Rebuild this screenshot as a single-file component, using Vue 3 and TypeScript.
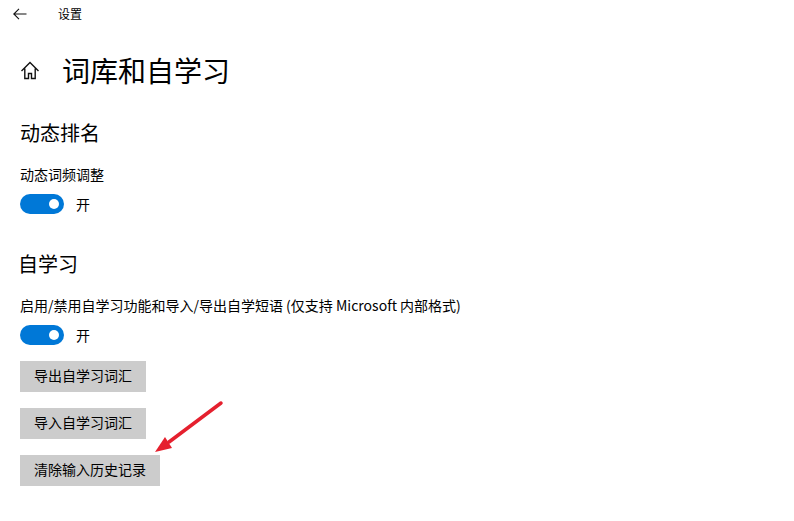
<script setup lang="ts">
interface Section {
  title: string
  label: string
  buttons: string[]
}

const sections: Section[] = [
  { title: '动态排名', label: '动态词频调整', buttons: [] },
  {
    title: '自学习',
    label: '启用/禁用自学习功能和导入/导出自学短语 (仅支持 Microsoft 内部格式)',
    buttons: ['导出自学习词汇', '导入自学习词汇', '清除输入历史记录'],
  },
]
</script>

<template>
  <div class="settings">
    <header class="topbar">
      <svg class="back" width="14" height="12" viewBox="0 0 14 12" fill="none" stroke="#111" stroke-width="1.1">
        <path d="M13.500 6H1M6 .8 .8 6 6 11.200" />
      </svg>
      <span class="app-name">设置</span>
    </header>

    <div class="page-head">
      <svg class="home" width="20" height="20" viewBox="0 0 20 20" fill="none" stroke="#111" stroke-width="1.4">
        <path d="M1.500 11 10 2.500 18.500 11M4.800 8.500v10h3.700v-5h3v5h3.700v-10" />
      </svg>
      <h1>词库和自学习</h1>
    </div>

    <section v-for="s in sections" :key="s.title" class="section">
      <h2>{{ s.title }}</h2>
      <div class="label">{{ s.label }}</div>
      <div class="toggle-row">
        <span class="toggle"><span class="knob"></span></span>
        <span class="state">开</span>
      </div>
      <div v-if="s.buttons.length" class="buttons">
        <button v-for="b in s.buttons" :key="b" type="button">{{ b }}</button>
      </div>
    </section>

    <svg class="arrow" width="80" height="60" viewBox="0 0 80 60">
      <path d="M72 3 20 42" stroke="#e5202e" stroke-width="3.500" stroke-linecap="round" fill="none" />
      <path d="M6 52 23 48 16 37Z" fill="#e5202e" />
    </svg>
  </div>
</template>

<style>
html,
body {
  margin: 0;
  background: #fff;
}
</style>

<style scoped>
.settings {
  position: relative;
  width: 794px;
  height: 521px;
  overflow: hidden;
  background: #fff;
  color: #000;
  font-family: "Noto Sans CJK SC", "Noto Sans", sans-serif;
  font-size: 14px;
}

.topbar {
  display: flex;
  align-items: center;
  height: 28px;
  padding-left: 13px;
}

.back {
  margin-right: 31px;
}

.app-name {
  font-size: 12px;
  line-height: 28px;
}

.page-head {
  display: flex;
  align-items: center;
  height: 40px;
  margin-top: 22px;
  padding-left: 20px;
}

.home {
  margin-right: 22px;
}

h1 {
  margin: 0;
  font-size: 28px;
  font-weight: 400;
  line-height: 40px;
}

.section {
  padding-left: 20px;
}

h2 {
  margin: 0;
  font-size: 20px;
  font-weight: 400;
  line-height: 28px;
}

.section:nth-of-type(1) {
  margin-top: 29px;
}

.section:nth-of-type(2) {
  margin-top: 36px;
}

.section:nth-of-type(2) h2 {
  margin-left: -2px;
}

.label {
  margin-top: 17px;
  line-height: 20px;
}

.toggle-row {
  display: flex;
  align-items: center;
  height: 20px;
  margin-top: 10px;
}

.toggle {
  display: flex;
  align-items: center;
  justify-content: flex-end;
  box-sizing: border-box;
  width: 44px;
  height: 20px;
  padding-right: 5px;
  border-radius: 10px;
  background: #0078d7;
}

.knob {
  width: 10px;
  height: 10px;
  border-radius: 50%;
  background: #fff;
}

.state {
  margin-left: 12px;
  line-height: 18px;
}

.buttons {
  display: flex;
  flex-direction: column;
  align-items: flex-start;
  gap: 16px;
  margin-top: 16px;
}

button {
  height: 31px;
  padding: 0 14px 3px;
  border: 0;
  background: #ccc;
  color: #000;
  font: inherit;
}

.arrow {
  position: absolute;
  left: 149px;
  top: 400px;
}
</style>
